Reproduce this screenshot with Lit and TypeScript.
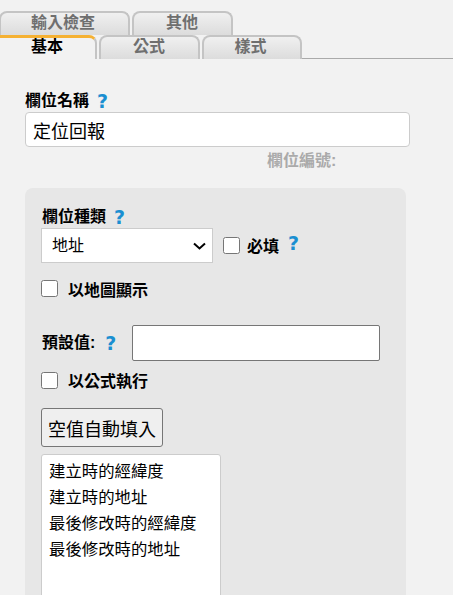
import { LitElement, html, css } from "lit";
import { customElement } from "lit/decorators.js";

const HELP = html`<span class="help">?</span>`;

@customElement("app-root")
export class AppRoot extends LitElement {
  static styles = css`
    :host {
      display: block;
      height: 595px;
      overflow: hidden;
      background: #f2f2f2;
      color: #000;
      font-family: "Liberation Sans", "Noto Sans CJK TC", sans-serif;
      font-size: 16px;
    }
    .tabs {
      padding-top: 11px;
      height: 48px;
    }
    .tab-row {
      display: flex;
      gap: 2px;
      height: 24px;
    }
    .tab-row.back {
      margin-left: -1px;
    }
    .tab-row.front::after {
      content: "";
      flex: 1;
      margin-left: -2px;
      border-bottom: 1px solid #aaa;
    }
    .tab {
      box-sizing: border-box;
      display: flex;
      justify-content: center;
      align-items: center;
      height: 24px;
      border: 2px solid #c4c4c4;
      border-bottom: 0;
      border-radius: 8px 8px 0 0;
      background: linear-gradient(#f0f0f0, #dcdcdc);
      color: #6f6f6f;
      font-weight: bold;
      line-height: 20px;
      padding: 0 3px 2px 0;
    }
    .tab.wide { width: 131px; }
    .tab.mid { width: 101px; padding-right: 1px; }
    .tab.narrow { width: 100px; }
    .tab.active {
      width: 97px;
      color: #000;
      background: #f2f2f2;
      border: 0;
      border-top: 3px solid #f5b133;
      border-right: 2px solid #c4c4c4;
      border-radius: 0 8px 0 0;
      padding: 0 1px 4px 0;
    }
    .content {
      padding: 31px 0 0 25px;
    }
    .label {
      font-weight: bold;
      line-height: 22px;
      display: flex;
      gap: 8px;
      align-items: center;
    }
    .help {
      color: #1a8fd1;
      font-family: "DejaVu Sans", sans-serif;
      font-weight: bold;
      font-size: 19px;
      line-height: 18px;
    }
    .name {
      display: block;
      box-sizing: border-box;
      width: 385px;
      height: 35px;
      margin: 0;
      padding: 0 7px;
      border: 1px solid #ccc;
      border-radius: 4px;
      background: #fff;
      font: inherit;
      font-size: 18px;
    }
    .field-id {
      margin: 4px 0 0 242px;
      line-height: 20px;
      font-weight: bold;
      color: #aaa;
    }
    .panel {
      box-sizing: border-box;
      width: 381px;
      height: 500px;
      margin-top: 17px;
      padding: 18px 16px;
      border-radius: 8px;
      background: #e7e7e7;
    }
    .panel > .label {
      margin-left: 1px;
    }
    .type-row {
      display: flex;
      align-items: center;
    }
    .select-wrap {
      position: relative;
      display: block;
      width: 172px;
      height: 35px;
      flex: none;
    }
    select {
      box-sizing: border-box;
      display: block;
      width: 100%;
      height: 100%;
      padding: 0 10px;
      border: 1px solid #ccc;
      border-radius: 0;
      background: #fff;
      font: inherit;
      appearance: none;
    }
    .chevron {
      position: absolute;
      top: 14px;
      right: 7px;
      width: 13px;
      height: 8px;
      pointer-events: none;
    }
    input[type="checkbox"] {
      margin: 0;
      width: 17px;
      height: 17px;
      flex: none;
    }
    .type-row input[type="checkbox"] {
      margin: 0 7px 0 10px;
    }
    .check-label {
      font-weight: bold;
      line-height: 22px;
    }
    .required .check-label {
      margin-top: 3px;
    }
    .required .help {
      margin: -6px 0 0 9px;
    }
    .check-row {
      display: flex;
      align-items: flex-start;
      gap: 10px;
    }
    .map {
      margin-top: 17px;
    }
    .default-row {
      display: flex;
      align-items: center;
      margin-top: 23px;
      padding-left: 1px;
    }
    .default-row .help {
      margin: 0 16px 0 10px;
    }
    .default-row input {
      box-sizing: border-box;
      width: 248px;
      height: 36px;
      margin: 0;
      border: 1px solid #767676;
      border-radius: 2px;
      background: #fff;
    }
    .formula {
      margin-top: 10px;
    }
    .formula input[type="checkbox"] {
      margin-top: 1px;
    }
    .fill {
      display: block;
      box-sizing: border-box;
      width: 122px;
      height: 39px;
      margin-top: 15px;
      padding: 0;
      border: 1px solid #767676;
      border-radius: 3px;
      background: #efefef;
      font: inherit;
      font-size: 18px;
      color: #000;
    }
    .list {
      box-sizing: border-box;
      width: 180px;
      height: 200px;
      margin-top: 7px;
      padding: 3px 7px;
      border: 1px solid #ccc;
      border-radius: 3px;
      background: #fff;
      font-size: 16.4px;
      line-height: 26px;
    }
  `;

  render() {
    return html`
      <div class="tabs">
        <div class="tab-row back">
          <div class="tab wide">輸入檢查</div>
          <div class="tab mid">其他</div>
        </div>
        <div class="tab-row front">
          <div class="tab active">基本</div>
          <div class="tab mid">公式</div>
          <div class="tab narrow">樣式</div>
        </div>
      </div>
      <div class="content">
        <div class="label">欄位名稱 ${HELP}</div>
        <input class="name" .value=${"定位回報"} />
        <div class="field-id">欄位編號:</div>
        <div class="panel">
          <div class="label">欄位種類 ${HELP}</div>
          <div class="type-row required">
            <span class="select-wrap">
              <select><option>地址</option></select>
              <svg class="chevron" viewBox="0 0 13 8">
                <path d="M1 1.5 L6.5 6.5 L12 1.5" fill="none" stroke="#000" stroke-width="2" />
              </svg>
            </span>
            <input type="checkbox" />
            <span class="check-label">必填</span>
            ${HELP}
          </div>
          <div class="check-row map">
            <input type="checkbox" />
            <span class="check-label">以地圖顯示</span>
          </div>
          <div class="default-row">
            <span class="check-label">預設值:</span>
            ${HELP}
            <input type="text" />
          </div>
          <div class="check-row formula">
            <input type="checkbox" />
            <span class="check-label">以公式執行</span>
          </div>
          <button class="fill">空值自動填入</button>
          <div class="list">
            <div>建立時的經緯度</div>
            <div>建立時的地址</div>
            <div>最後修改時的經緯度</div>
            <div>最後修改時的地址</div>
          </div>
        </div>
      </div>
    `;
  }
}
